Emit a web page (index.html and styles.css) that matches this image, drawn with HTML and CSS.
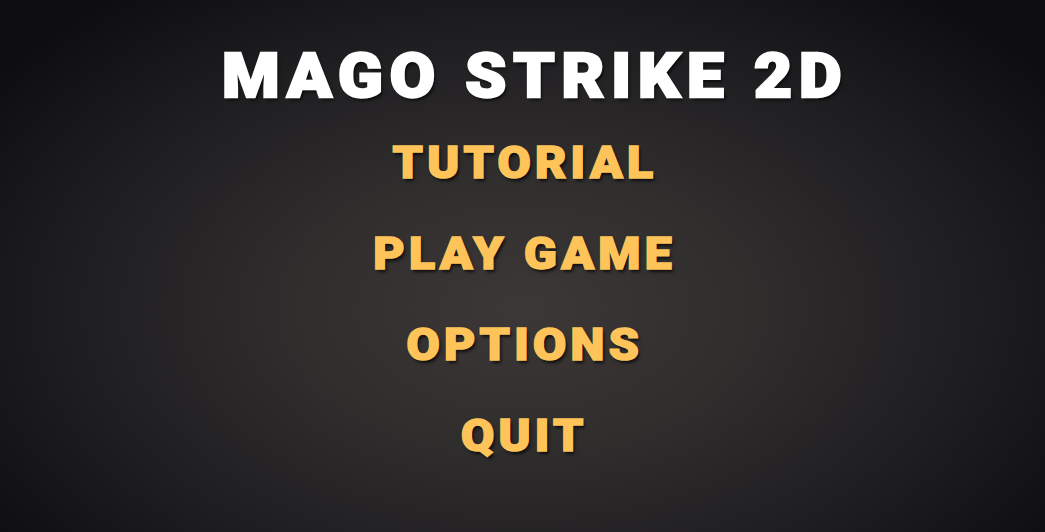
FILE: index.html
```html
<!DOCTYPE html>
<html lang="en">
<head>
<meta charset="utf-8">
<title>Mago Strike 2D</title>
<link rel="stylesheet" href="styles.css">
</head>
<body>
<main class="menu-screen">
  <h1 class="game-title">MAGO STRIKE 2D</h1>
  <nav class="main-menu">
    <a class="menu-item" href="#">TUTORIAL</a>
    <a class="menu-item" href="#">PLAY GAME</a>
    <a class="menu-item" href="#">OPTIONS</a>
    <a class="menu-item" href="#">QUIT</a>
  </nav>
</main>
</body>
</html>
```

FILE: styles.css
```css
html, body {
  margin: 0;
  height: 100%;
}

body {
  font-family: Roboto, "Liberation Sans", sans-serif;
  background-color: #161519;
  background-image:
    radial-gradient(ellipse 62% 75% at 50% 58%, #3c3837 0%, #302d2d 35%, #1e1d20 70%, #0e0e12 100%);
  overflow: hidden;
}

.menu-screen {
  height: 100%;
  display: flex;
  flex-direction: column;
  align-items: center;
  padding-top: 45px;
  box-sizing: border-box;
}

/* heavy, slightly widened white headline; the stroke thickens Roboto Bold toward a black weight */
.game-title {
  margin: 0 0 33px 18px;
  font-size: 62px;
  line-height: 1;
  font-weight: 900;
  letter-spacing: 6.5px;
  padding-left: 6.5px;
  color: #ffffff;
  -webkit-text-stroke: 2.4px #ffffff;
  text-shadow: 2px 3px 3px rgba(0, 0, 0, 0.7);
  transform: scaleX(1.06);
}

.main-menu {
  display: flex;
  flex-direction: column;
  align-items: center;
  gap: 46px;
}

.menu-item {
  font-size: 45px;
  line-height: 1;
  font-weight: 900;
  letter-spacing: 4px;
  padding-left: 4px;
  color: #fec45a;
  -webkit-text-stroke: 1.6px #fec45a;
  text-decoration: none;
  text-shadow: 2px 3px 3px rgba(0, 0, 0, 0.7);
  transform: scaleX(1.07);
}
```
